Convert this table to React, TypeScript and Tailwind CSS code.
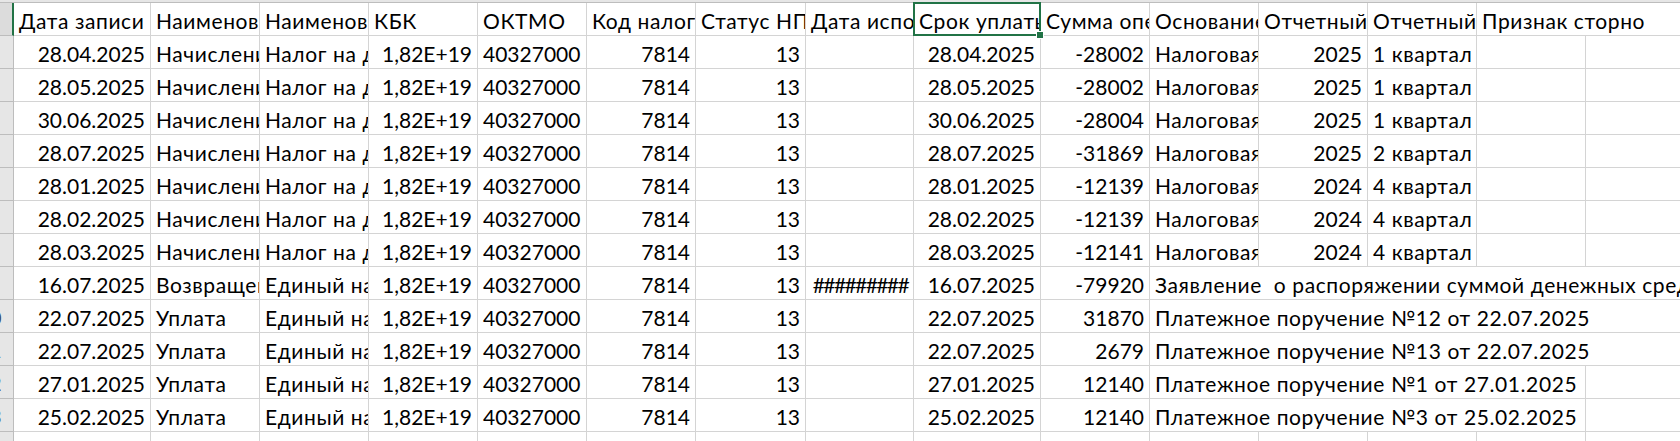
/**
 * Excel-style sheet fragment: ЕНС operations, header row + 12 records.
 * Cell I1 is the active cell (green frame + fill handle).
 */

type Cell = { t?: string; r?: boolean; s?: number };

// column widths, px (A..O); O runs off the right edge
const COLS = [137, 109, 109, 109, 109, 109, 110, 108, 127, 109, 109, 109, 109, 109, 130];

const NDFL = "Налог на доходы физических лиц";
const ENP = "Единый налоговый платеж";
const KBK = "1,82E+19";
const OKTMO = "40327000";

const CYR = /[А-Яа-яЁё]/;

function fill(cells: Cell[]): Cell[] {
  const used = cells.reduce((n, c) => n + (c.s ?? 1), 0);
  return [...cells, ...Array.from({ length: COLS.length - used }, () => ({}))];
}

function charge(d: string, sum: string, year: string, q: string): Cell[] {
  return fill([
    { t: d, r: true },
    { t: "Начисление" },
    { t: NDFL },
    { t: KBK, r: true },
    { t: OKTMO },
    { t: "7814", r: true },
    { t: "13", r: true },
    {},
    { t: d, r: true },
    { t: sum, r: true },
    { t: "Налоговая декларация" },
    { t: year, r: true },
    { t: q },
  ]);
}

function payment(d: string, sum: string, basis: string, span: number): Cell[] {
  return fill([
    { t: d, r: true },
    { t: "Уплата" },
    { t: ENP },
    { t: KBK, r: true },
    { t: OKTMO },
    { t: "7814", r: true },
    { t: "13", r: true },
    {},
    { t: d, r: true },
    { t: sum, r: true },
    { t: basis, s: span },
  ]);
}

const HEADER: Cell[] = [
  { t: "Дата записи" },
  { t: "Наименование операции" },
  { t: "Наименование налога" },
  { t: "КБК" },
  { t: "ОКТМО" },
  { t: "Код налогового органа" },
  { t: "Статус НП" },
  { t: "Дата исполнения" },
  { t: "Срок уплаты" },
  { t: "Сумма операции" },
  { t: "Основание" },
  { t: "Отчетный год" },
  { t: "Отчетный период" },
  { t: "Признак сторно", s: 2 },
];

const ROWS: Cell[][] = [
  HEADER,
  charge("28.04.2025", "-28002", "2025", "1 квартал"),
  charge("28.05.2025", "-28002", "2025", "1 квартал"),
  charge("30.06.2025", "-28004", "2025", "1 квартал"),
  charge("28.07.2025", "-31869", "2025", "2 квартал"),
  charge("28.01.2025", "-12139", "2024", "4 квартал"),
  charge("28.02.2025", "-12139", "2024", "4 квартал"),
  charge("28.03.2025", "-12141", "2024", "4 квартал"),
  fill([
    { t: "16.07.2025", r: true },
    { t: "Возвращение" },
    { t: ENP },
    { t: KBK, r: true },
    { t: OKTMO },
    { t: "7814", r: true },
    { t: "13", r: true },
    { t: "#########", r: true },
    { t: "16.07.2025", r: true },
    { t: "-79920", r: true },
    {
      t: "Заявление  о распоряжении суммой денежных средств, формирующих положительное сальдо ЕНС",
      s: 5,
    },
  ]),
  payment("22.07.2025", "31870", "Платежное поручение №12 от 22.07.2025", 5),
  payment("22.07.2025", "2679", "Платежное поручение №13 от 22.07.2025", 5),
  payment("27.01.2025", "12140", "Платежное поручение №1 от 27.01.2025", 4),
  payment("25.02.2025", "12140", "Платежное поручение №3 от 25.02.2025", 4),
  fill([]),
];

function RowHead({ n, active }: { n: number; active: boolean }) {
  return (
    <div
      className={
        active
          ? "flex w-[14px] shrink-0 justify-end overflow-hidden border-b border-r-2 border-b-[#bdbdbd] border-r-[#217346] bg-[#dcdcdc]"
          : "flex w-[14px] shrink-0 justify-end overflow-hidden border-b border-r border-[#bdbdbd] bg-[#e6e6e6]"
      }
    >
      <span className="w-[45px] shrink-0 pt-[3px] text-center text-[19px] leading-[29px] text-[#3d4a5c]">
        {n}
      </span>
    </div>
  );
}

function textClass(c: Cell) {
  if (!c.t) return "";
  if (c.t.startsWith("#")) return " text-right tracking-[-1.6px]";
  if (c.r) return " text-right";
  if (CYR.test(c.t)) return " tracking-[0.6px]";
  return "";
}

export default function App() {
  return (
    <div className="h-[441px] w-[1680px] overflow-hidden bg-white font-['Lato','Noto_Sans',sans-serif] text-[21px] text-black">
      <div className="h-[3px] border-b border-[#bdbdbd] bg-[#e6e6e6]" />
      {ROWS.map((row, ri) => {
        let col = 0;
        return (
          <div key={ri} className="flex h-[33px]">
            <RowHead n={ri + 1} active={ri === 0} />
            {row.map((c, ci) => {
              const span = c.s ?? 1;
              const w = COLS.slice(col, col + span).reduce((a, b) => a + b, 0);
              col += span;
              const selected = ri === 0 && ci === 8;
              return (
                <div
                  key={ci}
                  style={{ width: w }}
                  className={
                    "relative shrink-0 border-b border-r border-[#d4d4d4]" +
                    (selected ? " z-10" : "")
                  }
                >
                  <div
                    className={
                      "h-full overflow-hidden whitespace-pre px-[5px] pt-[3px] leading-[29px]" +
                      textClass(c)
                    }
                  >
                    {c.t}
                  </div>
                  {selected && (
                    <div className="pointer-events-none absolute -bottom-[1px] -left-[1px] -right-[1px] -top-[1px] border-2 border-[#217346]">
                      <span className="absolute -bottom-[5px] -right-[5px] h-[8px] w-[8px] border border-white bg-[#217346]" />
                    </div>
                  )}
                </div>
              );
            })}
          </div>
        );
      })}
    </div>
  );
}
